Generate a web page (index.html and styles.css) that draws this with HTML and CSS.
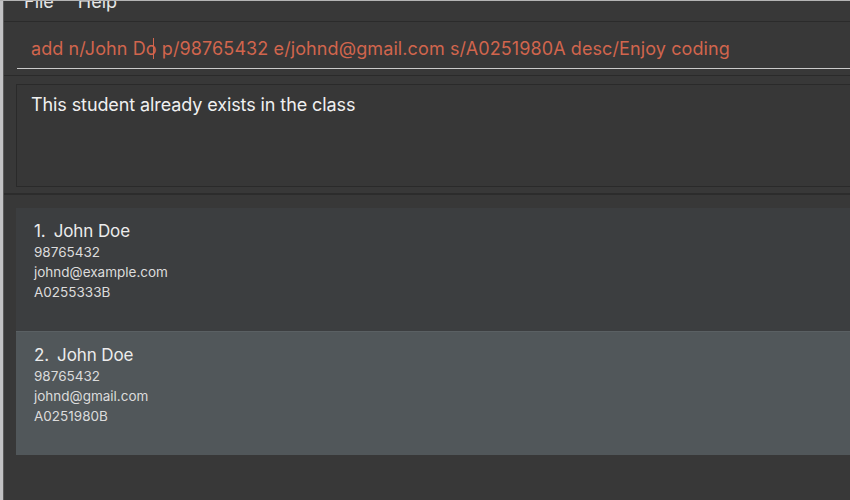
FILE: index.html
```html
<!DOCTYPE html>
<html>
<head>
<meta charset="utf-8">
<link rel="stylesheet" href="styles.css">
</head>
<body>
<div class="app">
  <div class="edge"></div>
  <div class="main">
    <div class="menubar">
      <span class="menu-item">File</span>
      <span class="menu-item">Help</span>
    </div>
    <div class="command">
      <div class="input">add n/John Do<span class="caret"></span> p/98765432 e/johnd@gmail.com s/A0251980A desc/Enjoy coding</div>
    </div>
    <div class="result-pane">
      <div class="result-box">This student already exists in the class</div>
    </div>
    <div class="list">
      <div class="card odd">
        <div class="name"><span class="idx">1.</span>John Doe</div>
        <div class="detail">98765432</div>
        <div class="detail">johnd@example.com</div>
        <div class="detail">A0255333B</div>
      </div>
      <div class="card even">
        <div class="name"><span class="idx">2.</span>John Doe</div>
        <div class="detail">98765432</div>
        <div class="detail">johnd@gmail.com</div>
        <div class="detail">A0251980B</div>
      </div>
    </div>
  </div>
</div>
</body>
</html>
```
FILE: styles.css
```css
html, body {
  margin: 0;
  padding: 0;
  background: #383838;
  font-family: Inter, "Liberation Sans", sans-serif;
}
.app {
  display: flex;
  width: 850px;
  height: 500px;
  overflow: hidden;
  border-top: 1px solid #b4b4b4;
  box-sizing: border-box;
}
.edge {
  width: 3px;
  flex: none;
  background: #c2c2c4;
  border-right: 1px solid #5a5a5a;
}
.main {
  flex: 1;
  display: flex;
  flex-direction: column;
  background: #383838;
  min-width: 0;
}
.menubar {
  height: 20px;
  border-bottom: 1px solid #2b2b2b;
  display: flex;
  gap: 24px;
  padding-left: 20px;
  overflow: hidden;
  flex: none;
}
.menu-item {
  color: #e6e6e6;
  font-size: 18px;
  line-height: 20px;
  margin-top: -9px;
}
.command {
  height: 54px;
  box-sizing: border-box;
  border-bottom: 1px solid #2a2a2a;
  padding-left: 13px;
  flex: none;
}
.input {
  height: 47px;
  box-sizing: border-box;
  border-bottom: 1.5px solid #cacaca;
  padding: 15px 0 0 14px;
  color: #d1654d;
  font-size: 18px;
  line-height: 24px;
  white-space: nowrap;
  letter-spacing: 0.1px;
}
.caret {
  display: inline-block;
  width: 1px;
  height: 21px;
  background: #d1654d;
  vertical-align: -4px;
  margin-left: -4px;
  margin-right: 3px;
}
.result-pane {
  padding: 8px 0 6px 12px;
  border-bottom: 2px solid #2c2c2c;
  flex: none;
}
.result-box {
  height: 103px;
  box-sizing: border-box;
  border: 1px solid #2a2a2a;
  border-right: none;
  background: #373737;
  padding: 8px 0 0 14px;
  color: #f0f0f0;
  font-size: 18px;
  line-height: 24px;
  letter-spacing: -0.1px;
}
.list {
  padding: 13px 0 0 12px;
  display: flex;
  flex-direction: column;
}
.card {
  height: 123px;
  box-sizing: border-box;
  padding: 12px 0 0 18px;
}
.odd { background: #3c3e40; }
.even { background: #51575a; border-top: 1px solid #5a6063; height: 124px; }
.name {
  color: #ececec;
  font-size: 17px;
  line-height: 22px;
  letter-spacing: -0.1px;
}
.idx {
  margin-right: 8px;
}
.detail {
  color: #dcdcdc;
  font-size: 13.5px;
  line-height: 20px;
}
```
